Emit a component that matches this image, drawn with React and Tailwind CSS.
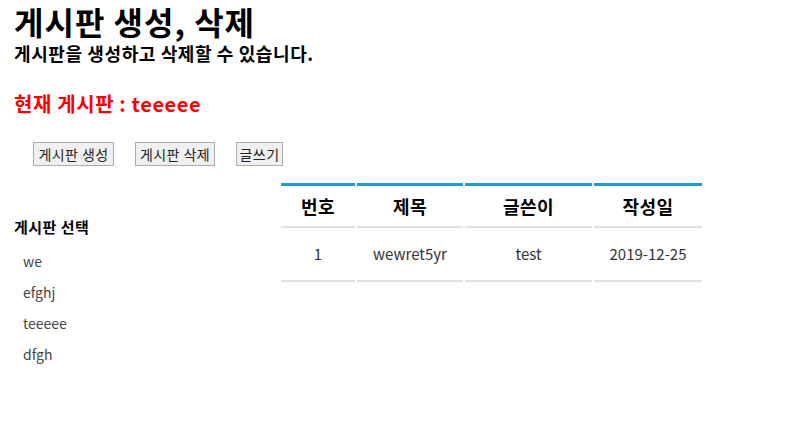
export default function App() {
  const font = { fontFamily: '"Noto Sans CJK KR", "Noto Sans", sans-serif' };
  const cols = ["번호", "제목", "글쓴이", "작성일"];
  const row = ["1", "wewret5yr", "test", "2019-12-25"];
  const buttons = [
    { t: "게시판 생성", w: "w-[81px]" },
    { t: "게시판 삭제", w: "w-[80px]" },
    { t: "글쓰기", w: "w-[47px]" },
  ];
  return (
    <div className="w-[800px] h-[423px] bg-white text-black overflow-hidden" style={font}>
      <div className="pl-[14px]">
        <h1 className="text-[32px] font-bold leading-[42px] tracking-[1px] m-0">게시판 생성, 삭제</h1>
        <h3 className="text-[18px] font-bold leading-[22px] tracking-[0.6px] m-0">게시판을 생성하고 삭제할 수 있습니다.</h3>
        <h2 className="mt-[26px] text-[20px] font-bold leading-[28px] tracking-[0.6px] text-[#ff0000]">현재 게시판 : teeeee</h2>
      </div>
      <div className="mt-[24px] flex gap-[21px] pl-[33px]">
        {buttons.map((b) => (
          <button key={b.t} className={`${b.w} h-[24px] border border-[#adadad] bg-[#f0f0f0] text-[14px] tracking-[0.4px] leading-[20px] text-[#222] whitespace-nowrap`}>
            {b.t}
          </button>
        ))}
      </div>
      <div className="mt-[17px] flex">
        <div className="w-[281px] pl-[14px] pt-[32px]">
          <div className="text-[15px] font-bold leading-[24px] tracking-[0.5px]">게시판 선택</div>
          <ul className="mt-[7px] pl-[9px] text-[14px] text-[#444] leading-[31px]">
            <li>we</li>
            <li>efghj</li>
            <li>teeeee</li>
            <li>dfgh</li>
          </ul>
        </div>
        <div className="grid grid-cols-[74px_106px_127px_108px] gap-x-[2px] gap-y-[1px] h-min">
          {cols.map((c) => (
            <div key={c} className="h-[45px] border-t-[3px] border-[#1b9dd4] border-b-2 border-b-[#e0e0e0] flex items-center justify-center text-[18px] font-bold tracking-[0.5px]">
              {c}
            </div>
          ))}
          {row.map((c, i) => (
            <div key={i} className="h-[53px] border-b-2 border-[#e0e0e0] flex items-center justify-center text-[15px] text-[#333]">
              {c}
            </div>
          ))}
        </div>
      </div>
    </div>
  );
}
